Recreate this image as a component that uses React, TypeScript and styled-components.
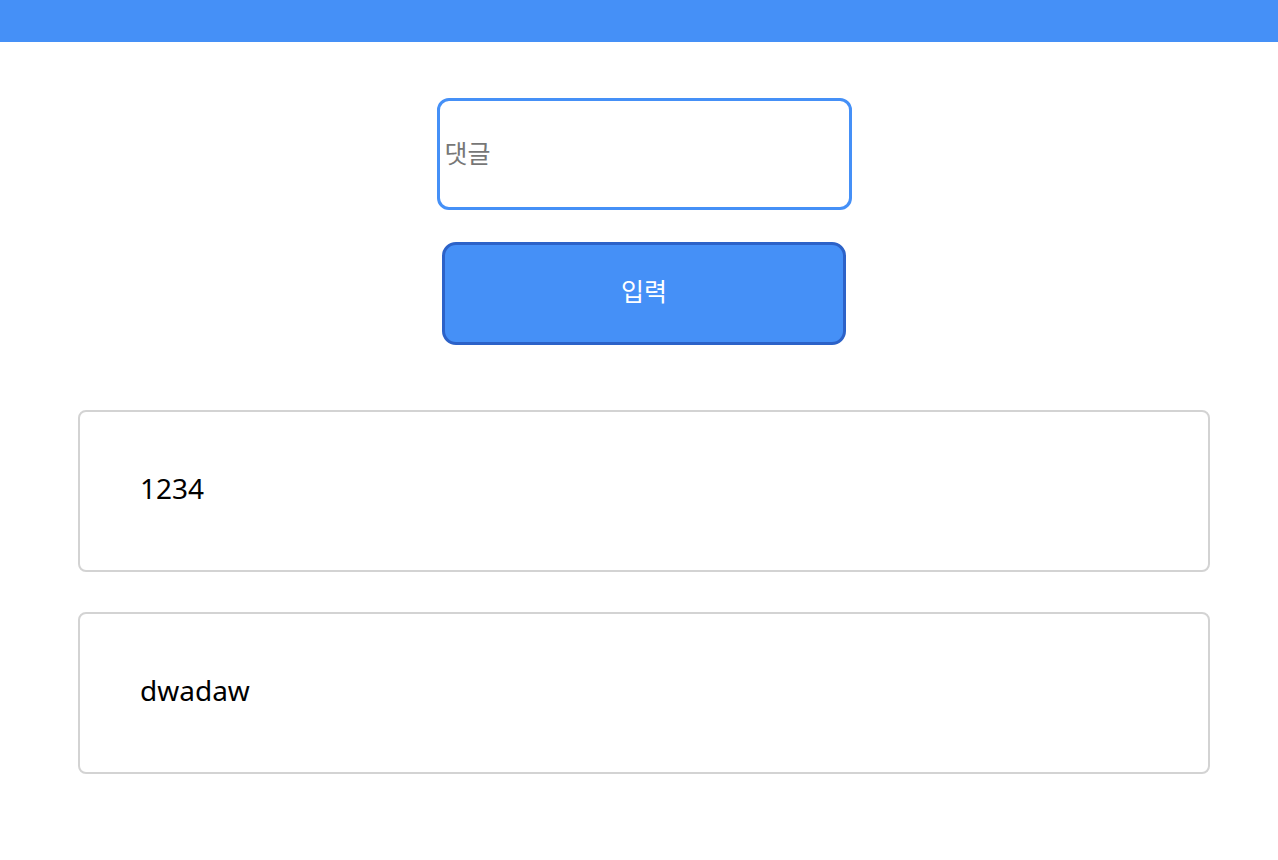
import React, { useState } from 'react';
import styled, { createGlobalStyle } from 'styled-components';

const GlobalStyle = createGlobalStyle`
  body {
    margin: 0;
    background: #ffffff;
    font-family: "Noto Sans", "Noto Sans CJK KR", sans-serif;
  }
`;

const Header = styled.header`
  height: 42px;
  background: #4590f7;
`;

const Form = styled.form`
  display: flex;
  flex-direction: column;
  align-items: center;
  padding: 56px 0 0 10px;
`;

const CommentInput = styled.input`
  box-sizing: border-box;
  width: 415px;
  height: 112px;
  padding: 0 5px 4px;
  border: 3px solid #4590f7;
  border-radius: 12px;
  outline: none;
  font-family: "Noto Sans CJK KR", sans-serif;
  font-size: 25px;
  color: #222;

  &::placeholder {
    color: #777777;
  }
`;

const SubmitButton = styled.button`
  box-sizing: border-box;
  width: 404px;
  height: 103px;
  margin-top: 32px;
  padding-bottom: 8px;
  border: 3px solid #2c62c8;
  border-radius: 14px;
  background: #4590f7;
  color: #ffffff;
  font-family: "Noto Sans CJK KR", sans-serif;
  font-size: 25px;
  cursor: pointer;
`;

const CommentList = styled.ul`
  list-style: none;
  margin: 65px 68px 0 78px;
  padding: 0;
  display: flex;
  flex-direction: column;
  gap: 40px;
`;

const CommentCard = styled.li`
  box-sizing: border-box;
  height: 162px;
  display: flex;
  align-items: center;
  padding: 0 60px 6px;
  border: 2px solid #d3d3d3;
  border-radius: 8px;
  font-family: "Noto Sans", "Noto Sans CJK KR", sans-serif;
  font-size: 28px;
  color: #000;
`;

const App: React.FC = () => {
  const [text, setText] = useState('');
  const [comments, setComments] = useState<string[]>(['1234', 'dwadaw']);

  const handleSubmit = (e: React.FormEvent) => {
    e.preventDefault();
    if (!text.trim()) return;
    setComments([...comments, text]);
    setText('');
  };

  return (
    <>
      <GlobalStyle />
      <Header />
      <Form onSubmit={handleSubmit}>
        <CommentInput
          placeholder="댓글"
          value={text}
          onChange={(e) => setText(e.target.value)}
        />
        <SubmitButton type="submit">입력</SubmitButton>
      </Form>
      <CommentList>
        {comments.map((c, i) => (
          <CommentCard key={i}>{c}</CommentCard>
        ))}
      </CommentList>
    </>
  );
};

export default App;
